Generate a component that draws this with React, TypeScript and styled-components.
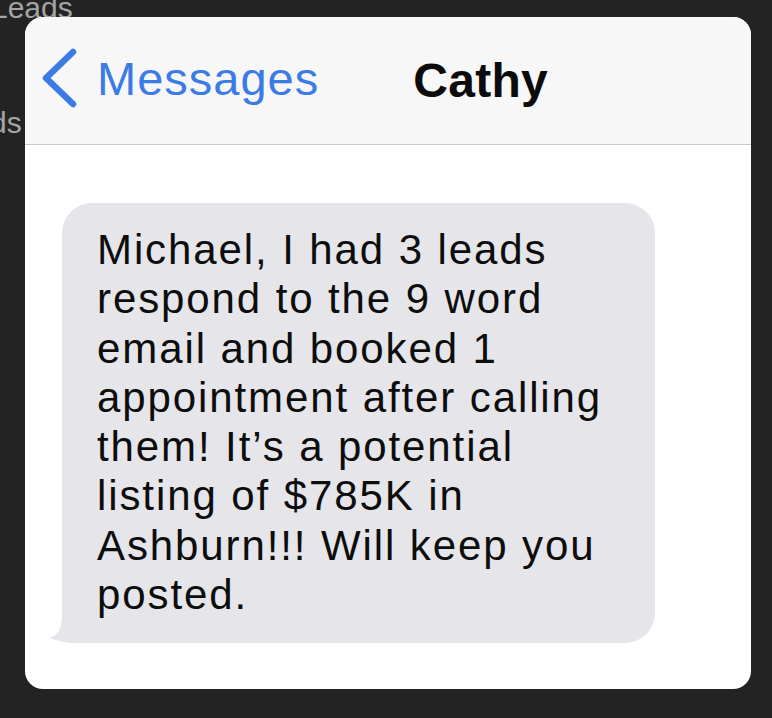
import React from 'react'
import styled, { createGlobalStyle } from 'styled-components'

const GlobalStyle = createGlobalStyle`
  html, body {
    margin: 0;
    padding: 0;
    background: #232323;
  }
  body {
    font-family: "Liberation Sans", Arial, sans-serif;
    overflow: hidden;
  }
`

const Page = styled.div`
  position: relative;
  width: 772px;
  height: 718px;
  padding: 17px 0 0 25px;
  box-sizing: border-box;
  background: #232323;
  overflow: hidden;
`

// sidebar labels peeking out from behind the card
const BehindLabel = styled.span<{ $top: number; $left: number }>`
  position: absolute;
  top: ${(p) => p.$top}px;
  left: ${(p) => p.$left}px;
  font-size: 30px;
  color: #a4a4a4;
  line-height: 1;
  white-space: nowrap;
`

const Card = styled.div`
  position: relative;
  width: 726px;
  height: 672px;
  background: #ffffff;
  border-radius: 18px;
  overflow: hidden;
  display: flex;
  flex-direction: column;
`

const Header = styled.div`
  height: 128px;
  flex-shrink: 0;
  background: #f7f7f8;
  border-bottom: 1.5px solid #c9c9cd;
  display: flex;
  align-items: center;
  padding: 0 0 6px 15px;
  box-sizing: border-box;
`

const BackButton = styled.div`
  display: flex;
  align-items: center;
  color: #3a7be6;
`

const BackLabel = styled.span`
  font-size: 47px;
  letter-spacing: 1px;
  margin-left: 17px;
  margin-top: 2px;
`

const Title = styled.span`
  font-size: 48px;
  font-weight: 700;
  letter-spacing: 0.3px;
  color: #0b0b0b;
  margin-left: 94px;
  margin-top: 6px;
`

const Body = styled.div`
  flex: 1;
  padding: 58px 0 0 37px;
`

const Bubble = styled.div`
  position: relative;
  width: 593px;
  box-sizing: border-box;
  padding: 22px 20px 24px 35px;
  background: #e5e5ea;
  border-radius: 30px;
  font-size: 42px;
  line-height: 49.3px;
  letter-spacing: 1.9px;
  color: #0d0d0d;
`

const Tail = styled.svg`
  position: absolute;
  left: -14px;
  bottom: 0;
`

const Chevron = () => (
  <svg width="40" height="60" viewBox="0 0 40 60">
    <path
      d="M33 4 L6 30 L33 56"
      fill="none"
      stroke="#3a7be6"
      strokeWidth="6.5"
      strokeLinecap="round"
      strokeLinejoin="round"
    />
  </svg>
)

const lines = [
  'Michael, I had 3 leads',
  'respond to the 9 word',
  'email and booked 1',
  'appointment after calling',
  'them! It\u2019s a potential',
  'listing of $785K in',
  'Ashburn!!! Will keep you',
  'posted.',
]

export default function App() {
  return (
    <>
      <GlobalStyle />
      <Page>
        <BehindLabel $top={-7} $left={-9}>Leads</BehindLabel>
        <BehindLabel $top={108} $left={-60}>Leads</BehindLabel>
        <Card>
          <Header>
            <BackButton>
              <Chevron />
              <BackLabel>Messages</BackLabel>
            </BackButton>
            <Title>Cathy</Title>
          </Header>
          <Body>
            <Bubble>
              {lines.map((l, i) => (
                <div key={i}>{l}</div>
              ))}
              <Tail width="40" height="30" viewBox="0 0 40 30">
                <path d="M40 0 L40 30 L26 30 C20 30 10 28 2 25 C10 22 14 16 14 0 Z" fill="#e5e5ea" />
              </Tail>
            </Bubble>
          </Body>
        </Card>
      </Page>
    </>
  )
}
